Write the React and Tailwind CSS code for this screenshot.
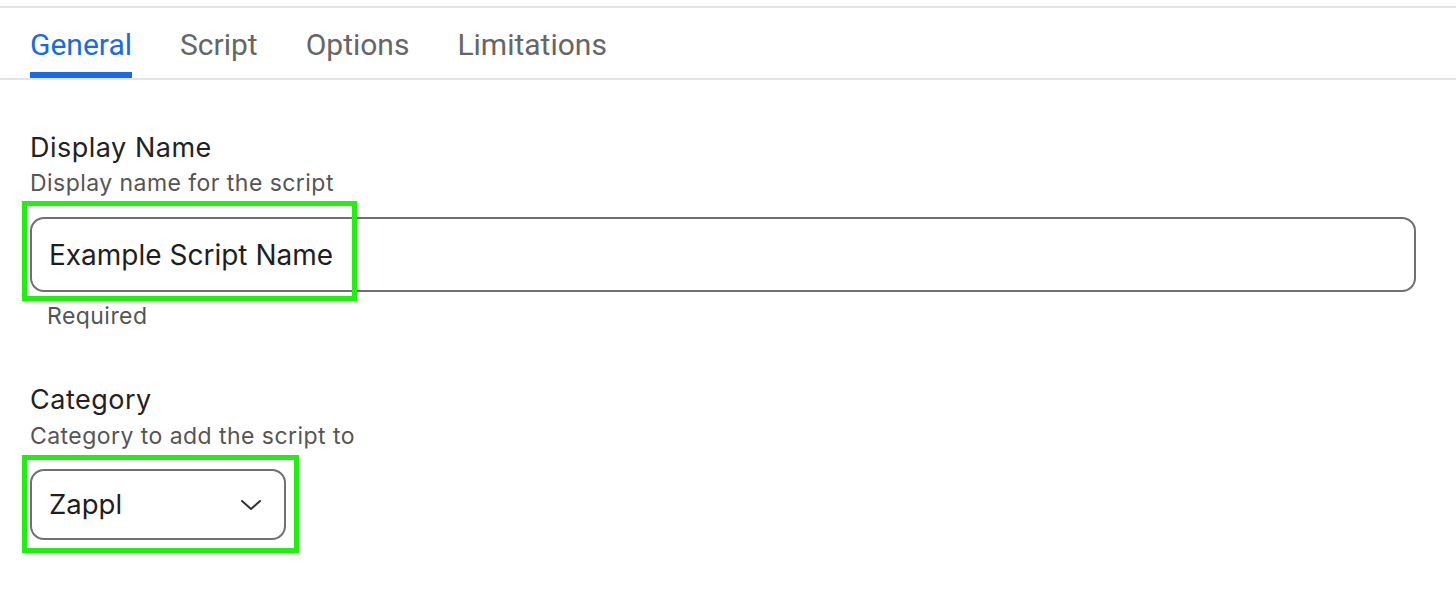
import React from 'react';

const tabs = ['General', 'Script', 'Options', 'Limitations'];

function Field({ label, hint, gap, children }) {
    return (
        <div>
            <p className="text-[27px] leading-[34px] tracking-[0.5px] text-[#222222]">{label}</p>
            <p className={`text-[23px] leading-[28px] tracking-[0.45px] text-[#555555] ${gap}`}>{hint}</p>
            {children}
        </div>
    );
}

export default function App() {
    return (
        <div className="w-[1456px] h-[592px] bg-white overflow-hidden pt-[6px]" style={{ fontFamily: 'Inter, "Noto Sans", sans-serif' }}>
            {/* Tab bar */}
            <div className="border-t-2 border-b-2 border-[#e4e4e4]">
                <div className="flex gap-[48px] px-[30px]" style={{ fontFamily: 'Roboto, "Liberation Sans", sans-serif' }}>
                    {tabs.map((t, i) => (
                        <div key={t} className="flex flex-col">
                            <span className={`text-[30px] leading-[32px] pt-[21px] pb-[11px] ${i === 0 ? 'text-[#1a6be0]' : 'text-[#666666]'}`}>{t}</span>
                            <div className={`h-[6px] ${i === 0 ? 'bg-[#1a6be0]' : 'bg-transparent'}`} />
                        </div>
                    ))}
                </div>
            </div>

            {/* Form */}
            <div className="px-[30px] pt-[51px]">
                <Field label="Display Name" hint="Display name for the script" gap="mt-[4px]">
                    <div className="relative mt-[20px] mr-[10px]">
                        <div className="h-[75px] border-2 border-[#707070] rounded-[14px] flex items-center px-[17px]">
                            <span className="text-[28px] text-[#1e1e1e]">Example Script Name</span>
                        </div>
                        <div className="absolute left-[-8px] top-[-16px] w-[335px] h-[100px] border-[5px] border-[#22ee11] pointer-events-none" />
                    </div>
                    <p className="text-[23px] leading-[28px] tracking-[0.45px] text-[#555555] mt-[10px] ml-[17px]">Required</p>
                </Field>

                <div className="mt-[53px]">
                    <Field label="Category" hint="Category to add the script to" gap="mt-[5px]">
                        <div className="relative mt-[19px] w-[256px]">
                            <div className="h-[71px] border-2 border-[#707070] rounded-[14px] flex items-center justify-between pl-[17px] pr-[22px]">
                                <span className="text-[27.5px] text-[#1e1e1e]">Zappl</span>
                                <svg width="22" height="12" viewBox="0 0 22 12" fill="none" stroke="#333" strokeWidth="2" strokeLinecap="round" strokeLinejoin="round">
                                    <path d="M2 2l9 8 9-8" />
                                </svg>
                            </div>
                            <div className="absolute left-[-8px] top-[-14px] w-[277px] h-[98px] border-[5px] border-[#22ee11] pointer-events-none" />
                        </div>
                    </Field>
                </div>
            </div>
        </div>
    );
}
